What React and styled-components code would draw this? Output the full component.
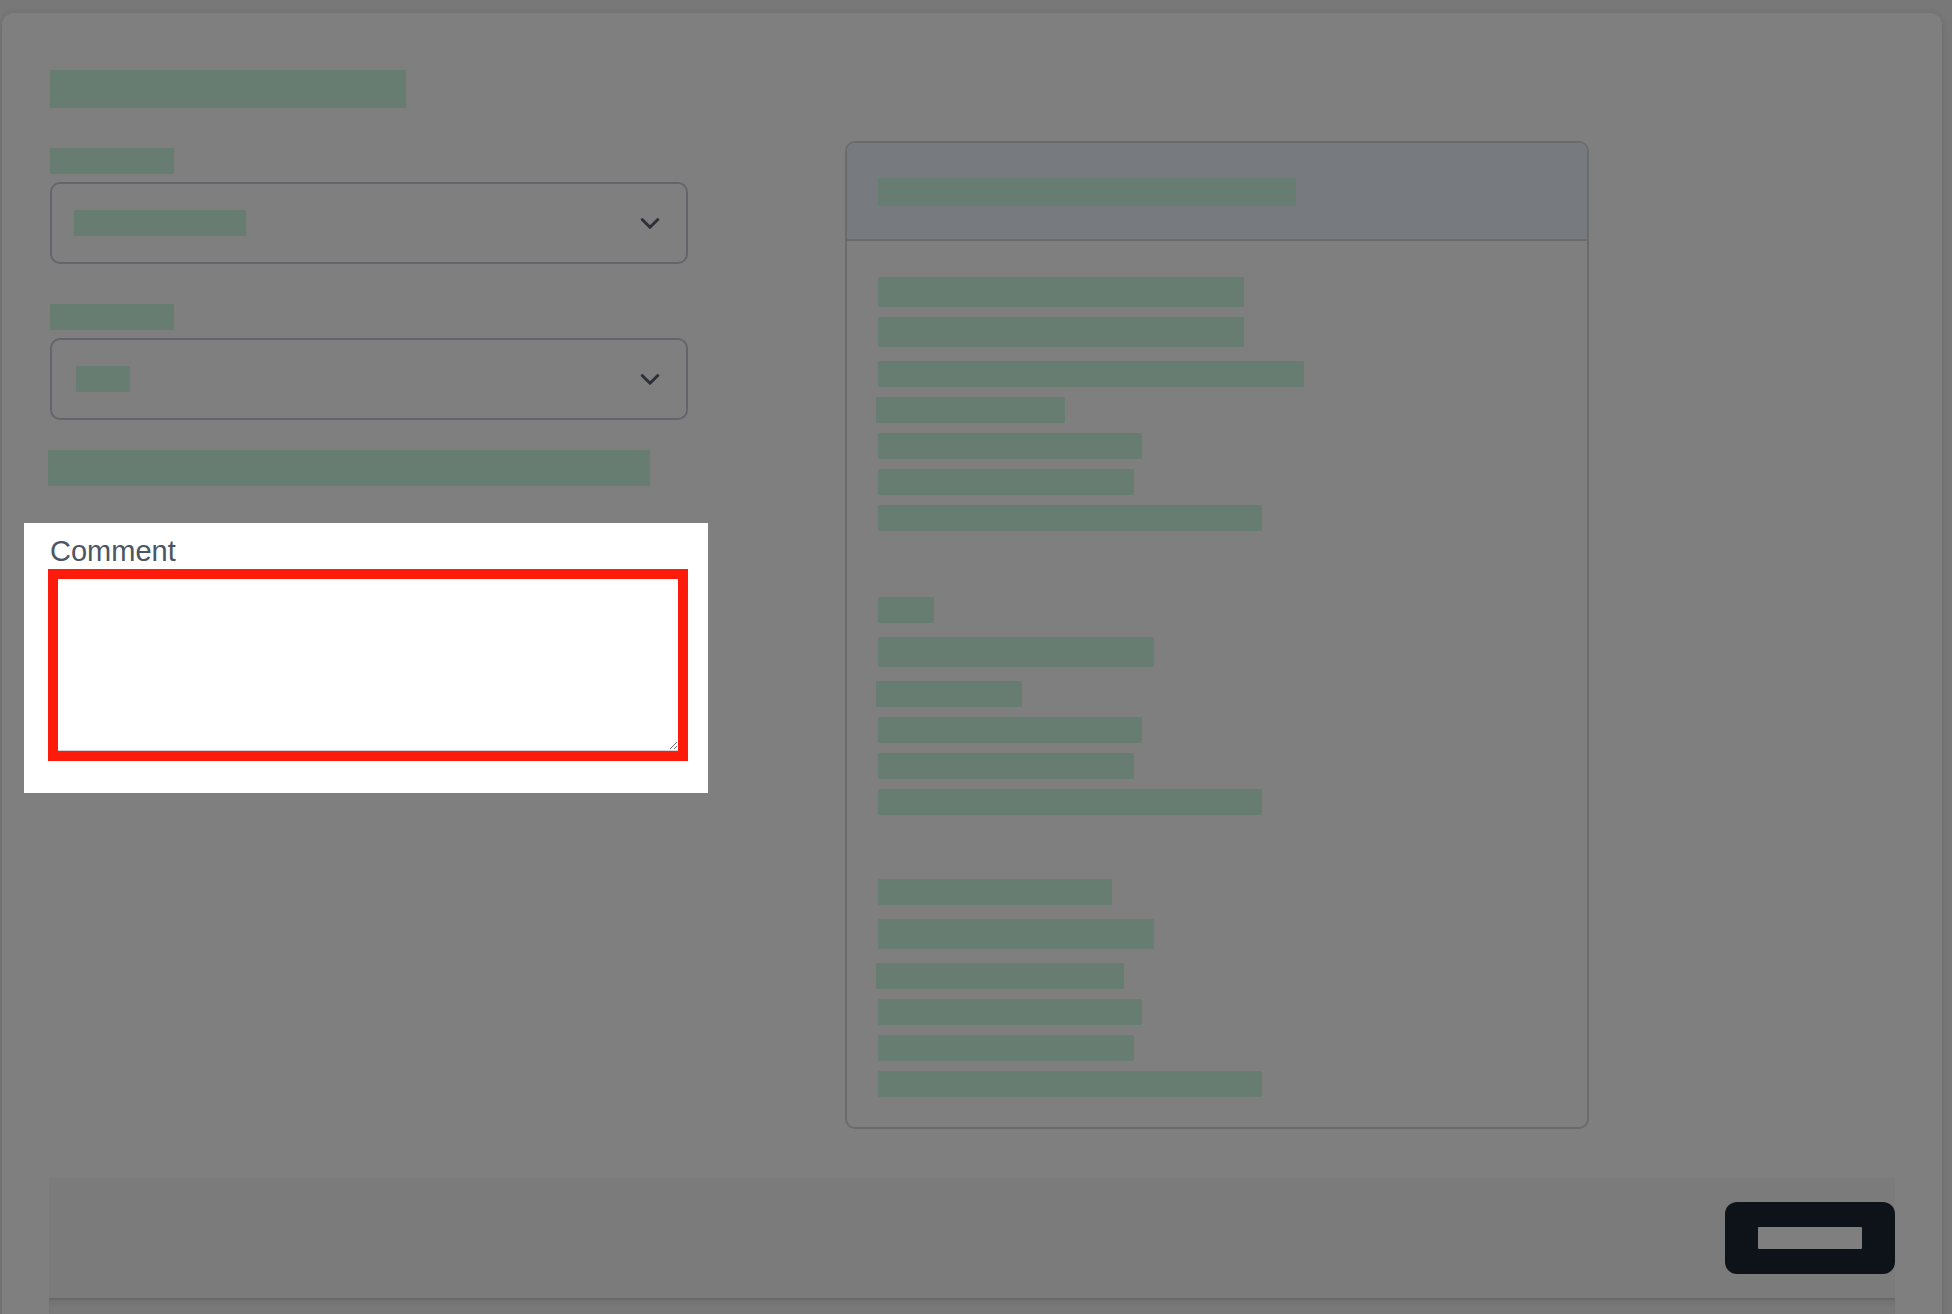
import React from 'react';
import styled, { createGlobalStyle } from 'styled-components';

const GlobalStyle = createGlobalStyle`
  html, body {
    margin: 0;
    padding: 0;
    background: #f0f0f0;
    font-family: "Liberation Sans", Arial, sans-serif;
  }
  * {
    box-sizing: border-box;
  }
`;

const Page = styled.div`
  padding: 13px 10px 0 2px;
`;

const Card = styled.div`
  background: #ffffff;
  border-radius: 12px;
  box-shadow: 0 2px 8px rgba(0, 0, 0, 0.12);
  padding: 57px 47px 0 48px;
`;

// grey-green placeholders standing in for copy that isn't shown
const Bar = styled.span`
  display: block;
  width: ${(p) => p.$w}px;
  height: ${(p) => p.$h || 26}px;
  margin-top: ${(p) => p.$mt || 0}px;
  margin-left: ${(p) => p.$x || 0}px;
  background: ${(p) => p.$tone || '#d1fae5'};
  border-radius: 1px;
  flex-shrink: 0;
`;

const Main = styled.div`
  display: flex;
  align-items: flex-start;
  gap: 157px;
  margin-top: 33px;
`;

const FormColumn = styled.div`
  width: 638px;
  display: flex;
  flex-direction: column;
`;

const SelectBox = styled.div`
  display: flex;
  align-items: center;
  justify-content: space-between;
  height: 82px;
  margin-top: 8px;
  padding: 0 26px 0 22px;
  border: 2px solid #c9cad6;
  border-radius: 10px;
  background: #ffffff;
  cursor: pointer;
`;

const Chevron = () => (
  <svg width="20" height="13" viewBox="0 0 20 13" fill="none">
    <path
      d="M2.2 2.5l7.8 7.8 7.8-7.8"
      stroke="#5a6070"
      strokeWidth="3"
      strokeLinecap="round"
      strokeLinejoin="round"
    />
  </svg>
);

const Overlay = styled.div`
  position: fixed;
  inset: 0;
  background: rgba(0, 0, 0, 0.5);
  z-index: 50;
  pointer-events: none;
`;

const Spotlight = styled.div`
  position: relative;
  z-index: 60;
  width: 684px;
  margin: 37px 0 0 -26px;
  padding: 14px 20px 32px 26px;
  background: #ffffff;
`;

const FieldLabel = styled.label`
  display: block;
  font-size: 29px;
  line-height: 29px;
  color: #4b5563;
`;

const CommentArea = styled.textarea`
  display: block;
  width: 620px;
  height: 172px;
  margin: 13px 0 10px 8px;
  padding: 12px;
  border: none;
  border-bottom: 1px solid #d1d5db;
  outline: 10px solid #fd1c0c;
  background: #ffffff;
  font: inherit;
  resize: vertical;
`;

const Panel = styled.div`
  width: 744px;
  border: 2px solid #d6d7da;
  border-radius: 10px;
  overflow: hidden;
`;

const PanelHeader = styled.div`
  padding: 35px 31px 33px;
  background: #eff6ff;
  border-bottom: 2px solid #d6d7da;
`;

const PanelBody = styled.div`
  display: flex;
  flex-direction: column;
  padding: 36px 31px 30px;
`;

const Section = styled.div`
  display: flex;
  flex-direction: column;
  margin-top: ${(p) => p.$mt || 0}px;
`;

const Footer = styled.div`
  display: flex;
  align-items: center;
  justify-content: flex-end;
  height: 120px;
  margin: 49px 0 0 -1px;
  background: #f7f7f7;
`;

const PrimaryButton = styled.button`
  display: flex;
  align-items: center;
  justify-content: center;
  width: 170px;
  height: 72px;
  border: none;
  border-radius: 12px;
  background: #1d2634;
  cursor: pointer;
`;

const Below = styled.div`
  height: 40px;
  margin-left: -1px;
  background: #f3f3f3;
  border-top: 2px solid #d2d2d2;
  box-shadow: inset 0 4px 5px rgba(0, 0, 0, 0.06);
`;

const sections = [
  [
    { w: 366, h: 30 },
    { w: 366, h: 30, mt: 10 },
    { w: 426, mt: 14 },
    { w: 189, mt: 10, x: -2 },
    { w: 264, mt: 10 },
    { w: 256, mt: 10 },
    { w: 384, mt: 10 },
  ],
  [
    { w: 56 },
    { w: 276, h: 30, mt: 14 },
    { w: 146, mt: 14, x: -2 },
    { w: 264, mt: 10 },
    { w: 256, mt: 10 },
    { w: 384, mt: 10 },
  ],
  [
    { w: 234 },
    { w: 276, h: 30, mt: 14 },
    { w: 248, mt: 14, x: -2 },
    { w: 264, mt: 10 },
    { w: 256, mt: 10 },
    { w: 384, mt: 10 },
  ],
];

const sectionGaps = [0, 66, 64];

export default function App() {
  return (
    <>
      <GlobalStyle />
      <Page>
        <Card>
          <Bar $w={356} $h={38} />
          <Main>
            <FormColumn>
              <Bar $w={124} $mt={7} />
              <SelectBox>
                <Bar $w={172} />
                <Chevron />
              </SelectBox>
              <Bar $w={124} $mt={40} />
              <SelectBox>
                <Bar $w={54} $x={2} />
                <Chevron />
              </SelectBox>
              <Bar $w={602} $h={36} $mt={30} $x={-2} />
              <Spotlight>
                <FieldLabel htmlFor="comment">Comment</FieldLabel>
                <CommentArea id="comment" />
              </Spotlight>
            </FormColumn>
            <Panel>
              <PanelHeader>
                <Bar $w={418} $h={28} />
              </PanelHeader>
              <PanelBody>
                {sections.map((rows, i) => (
                  <Section key={i} $mt={sectionGaps[i]}>
                    {rows.map((r, j) => (
                      <Bar key={j} $w={r.w} $h={r.h} $mt={r.mt} $x={r.x} />
                    ))}
                  </Section>
                ))}
              </PanelBody>
            </Panel>
          </Main>
          <Footer>
            <PrimaryButton>
              <Bar $w={104} $h={22} $tone="#ffffff" />
            </PrimaryButton>
          </Footer>
          <Below />
        </Card>
      </Page>
      <Overlay />
    </>
  );
}
